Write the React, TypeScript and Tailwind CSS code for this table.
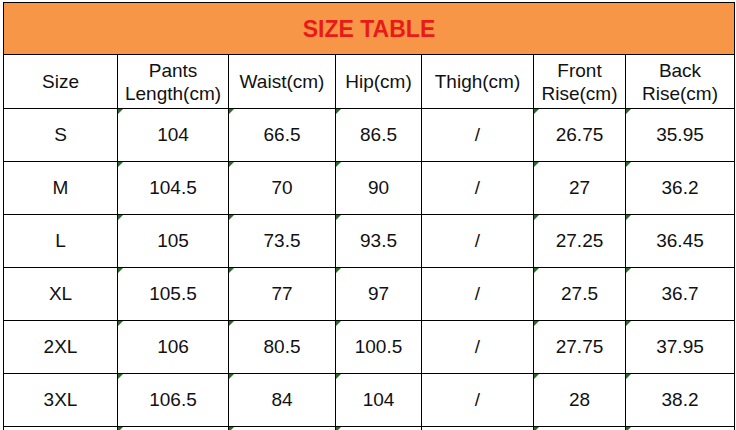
const columns = [
  { label: ["Size"], width: 114, mark: false },
  { label: ["Pants", "Length(cm)"], width: 111, mark: true },
  { label: ["Waist(cm)"], width: 107, mark: true },
  { label: ["Hip(cm)"], width: 86, mark: true },
  { label: ["Thigh(cm)"], width: 112, mark: false },
  { label: ["Front", "Rise(cm)"], width: 92, mark: true },
  { label: ["Back", "Rise(cm)"], width: 109, mark: true },
];

const rows = [
  ["S", "104", "66.5", "86.5", "/", "26.75", "35.95"],
  ["M", "104.5", "70", "90", "/", "27", "36.2"],
  ["L", "105", "73.5", "93.5", "/", "27.25", "36.45"],
  ["XL", "105.5", "77", "97", "/", "27.5", "36.7"],
  ["2XL", "106", "80.5", "100.5", "/", "27.75", "37.95"],
  ["3XL", "106.5", "84", "104", "/", "28", "38.2"],
];

// little green "number stored as text" corner, like in the spreadsheet
function Mark() {
  return (
    <span className="absolute left-0 top-0 h-0 w-0 border-r-[5px] border-t-[5px] border-r-transparent border-t-[#2a6b2a]" />
  );
}

export default function App() {
  return (
    <div className="min-h-[430px] bg-white pl-[3px] pt-[2px] font-['Liberation_Sans',Arial,sans-serif] text-[19px] text-[#111]">
      <div className="w-[732px] border-l border-t border-black">
        <div className="flex h-[52px] items-center justify-center border-b border-r border-black bg-[#f79646] pt-[2px] text-[23px] font-bold text-[#e81a1a]">
          SIZE TABLE
        </div>

        <div className="grid grid-cols-[114px_111px_107px_86px_112px_92px_109px]">
          {columns.map((col, i) => (
            <div
              key={i}
              className="flex h-[54px] flex-col items-center justify-center border-b border-r border-black leading-[23px]"
            >
              {col.label.map((line) => (
                <span key={line}>{line}</span>
              ))}
            </div>
          ))}

          {rows.map((row, r) =>
            row.map((value, c) => (
              <div
                key={`${r}-${c}`}
                className="relative flex h-[53px] items-center justify-center border-b border-r border-black"
              >
                {columns[c].mark && <Mark />}
                {value}
              </div>
            )),
          )}

          {columns.map((col, i) => (
            <div key={`tail-${i}`} className="relative h-[8px] border-r border-black">
              {col.mark && <Mark />}
            </div>
          ))}
        </div>
      </div>
    </div>
  );
}
